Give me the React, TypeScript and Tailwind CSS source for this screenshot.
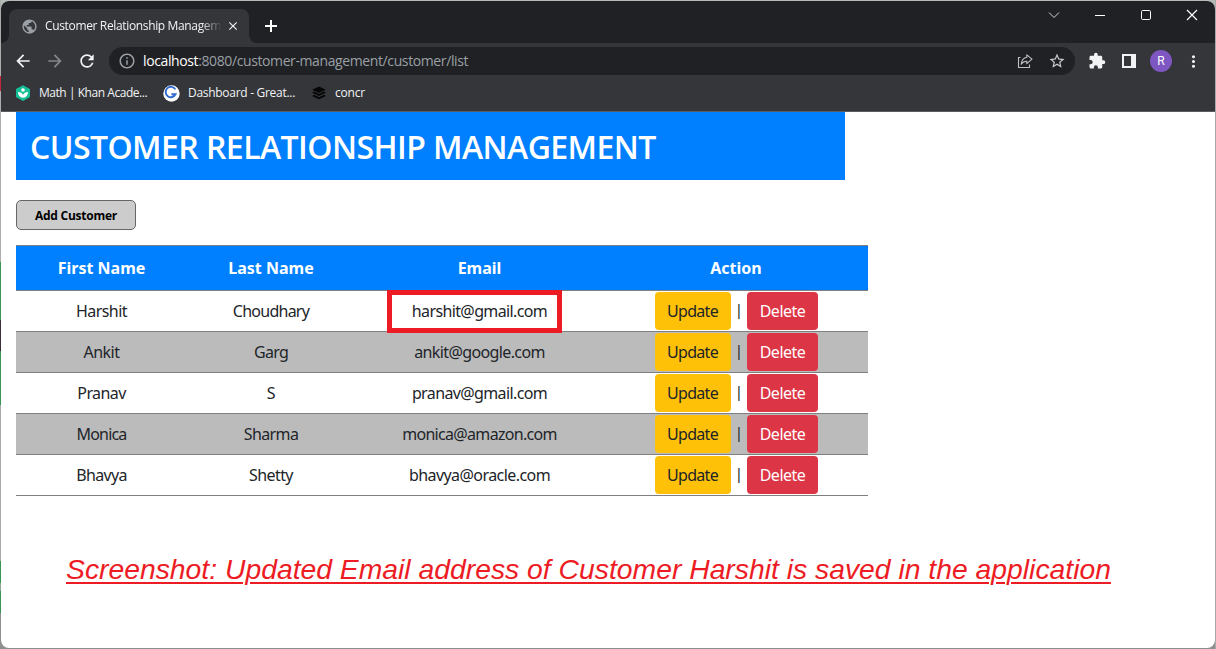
import type { ReactNode } from "react";
import {
  MdArrowBack,
  MdArrowForward,
  MdClose,
  MdExtension,
  MdInfoOutline,
  MdMoreVert,
  MdPublic,
  MdRefresh,
  MdStarBorder,
} from "react-icons/md";

type Customer = { first: string; last: string; email: string; firstTrack: string; lastTrack: string; emailTrack: string };

const customers: Customer[] = [
  { first: "Harshit", last: "Choudhary", email: "harshit@gmail.com", firstTrack: "tracking-[-0.55px]", lastTrack: "tracking-[-0.75px]", emailTrack: "tracking-[-0.62px]" },
  { first: "Ankit", last: "Garg", email: "ankit@google.com", firstTrack: "tracking-[-0.5px]", lastTrack: "tracking-[-0.7px]", emailTrack: "tracking-[-0.62px]" },
  { first: "Pranav", last: "S", email: "pranav@gmail.com", firstTrack: "tracking-[-0.6px]", lastTrack: "tracking-[-0.3px]", emailTrack: "tracking-[-0.62px]" },
  { first: "Monica", last: "Sharma", email: "monica@amazon.com", firstTrack: "tracking-[-0.85px]", lastTrack: "tracking-[-0.6px]", emailTrack: "tracking-[-0.68px]" },
  { first: "Bhavya", last: "Shetty", email: "bhavya@oracle.com", firstTrack: "tracking-[-0.7px]", lastTrack: "tracking-[-0.6px]", emailTrack: "tracking-[-0.57px]" },
];

const uiFont = "font-['Open_Sans','Noto_Sans',sans-serif]";
const pageFont = "font-['Noto_Sans','Open_Sans',sans-serif]";

function ShareIcon() {
  return (
    <svg width="16" height="16" viewBox="0 0 16 16" fill="none" stroke="#bdc1c6" strokeWidth="1.1">
      <path d="M3.5 4.5H1.5V14.5H12.5V11.5" />
      <path d="M9.8 1.8 15 6.2 9.8 10.6V8.2C7.2 8.2 5.4 9.2 4.2 11.2 4.6 7.6 6.6 4.8 9.8 4.3Z" strokeLinejoin="round" />
    </svg>
  );
}

function KhanIcon() {
  return (
    <svg width="16" height="16" viewBox="0 0 16 16">
      <path d="M8 0.2 14.2 3.4Q15 3.8 15 4.6V11.4Q15 12.2 14.2 12.6L8 15.9 1.8 12.6Q1 12.2 1 11.4V4.6Q1 3.8 1.8 3.4Z" fill="#14bf96" />
      <circle cx="8" cy="5" r="1.8" fill="#fff" />
      <path d="M3 7Q6.8 7.2 8 10 9.2 7.2 13 7 13 12.4 8 12.7 3 12.4 3 7Z" fill="#fff" />
    </svg>
  );
}

function GreatIcon() {
  return (
    <svg width="17" height="17" viewBox="0 0 17 17">
      <circle cx="8.5" cy="8.5" r="8.2" fill="#fff" />
      <path d="M12.4 4.4A5.2 5.2 0 1 0 12.6 9.2H8.4" fill="none" stroke="#2f6bd0" strokeWidth="1.9" />
    </svg>
  );
}

function StackIcon() {
  return (
    <svg width="14" height="14" viewBox="0 0 14 14" fill="#060606">
      <path d="M7 0.5 13.8 3.7 7 6.9 0.2 3.7Z" />
      <path d="M2 5.6 0.2 6.8 7 10 13.8 6.8 12 5.6 7 8Z" />
      <path d="M2 8.8 0.2 10 7 13.3 13.8 10 12 8.8 7 11.2Z" />
    </svg>
  );
}

function TabStrip() {
  return (
    <div className="flex h-[42px] items-start bg-[#202124]">
      <div className="relative ml-2 mt-2 flex h-[34px] w-60 items-center rounded-t-lg bg-[#35363a] pl-3">
        <svg className="absolute bottom-0 -left-2" width="8" height="8">
          <path d="M8 0V8H0A8 8 0 0 0 8 0Z" fill="#35363a" />
        </svg>
        <svg className="absolute bottom-0 -right-2" width="8" height="8">
          <path d="M0 0V8H8A8 8 0 0 1 0 0Z" fill="#35363a" />
        </svg>
        <MdPublic size={17} color="#9aa0a6" />
        <div className="ml-[7px] w-[177px] overflow-hidden whitespace-nowrap text-[12px] leading-4 tracking-[-0.35px] text-[#f1f3f4] [mask-image:linear-gradient(to_right,black_88%,transparent)]">
          Customer Relationship Managem
        </div>
        <MdClose className="ml-[4px]" size={14} color="#f1f3f4" />
      </div>
      <svg className="ml-4 mt-[19px]" width="12" height="12" viewBox="0 0 12 12" stroke="#fff" strokeWidth="2">
        <path d="M6 0V12M0 6H12" />
      </svg>
      <div className="ml-auto mr-[17px] mt-[7px] flex items-center gap-[34px]">
        <svg width="12" height="14" viewBox="0 0 12 14" fill="none" stroke="#d5d6d8">
          <path d="M1 4.5 6 9.5 11 4.5" />
        </svg>
        <svg width="12" height="14" viewBox="0 0 12 14" stroke="#fff">
          <path d="M1 7.5H11" />
        </svg>
        <svg width="12" height="14" viewBox="0 0 12 14" fill="none" stroke="#fff">
          <rect x="1.5" y="2.5" width="9" height="9" rx="1.2" />
        </svg>
        <svg width="12" height="14" viewBox="0 0 12 14" stroke="#fff" strokeWidth="1.2">
          <path d="M1 2 11 12M11 2 1 12" />
        </svg>
      </div>
    </div>
  );
}

function Toolbar() {
  return (
    <div className="flex h-9 items-center bg-[#35363a] pl-3">
      <MdArrowBack size={20} color="#f1f3f4" />
      <MdArrowForward className="ml-3" size={20} color="#85878b" />
      <MdRefresh className="ml-3" size={20} color="#f1f3f4" />
      <div className="ml-3 flex h-7 w-[966px] items-center rounded-full bg-[#202124] pl-[9px] pr-[9px]">
        <MdInfoOutline size={18} color="#9aa0a6" />
        <div className="ml-[7px] whitespace-nowrap text-[14px] leading-5 tracking-[-0.39px] text-[#9aa0a6]">
          <span className="text-white">localhost</span>:8080/customer-management/customer/list
        </div>
        <div className="ml-auto flex items-center gap-[15px]">
          <ShareIcon />
          <MdStarBorder size={18} color="#c8cbcf" />
        </div>
      </div>
      <MdExtension className="ml-[13px]" size={18} color="#f1f3f4" />
      <svg className="ml-4" width="14" height="14" viewBox="0 0 14 14">
        <path d="M0 0H14V14H0ZM2 2V12H9V2Z" fill="#f1f3f4" fillRule="evenodd" />
      </svg>
      <div className="ml-[14px] flex size-[22px] items-center justify-center rounded-full bg-[#7e57c2] text-[12px] leading-none text-white font-[Roboto,sans-serif]">
        R
      </div>
      <MdMoreVert className="ml-3" size={19} color="#f1f3f4" />
    </div>
  );
}

function Bookmark({ icon, gap, children }: { icon: ReactNode; gap: string; children: ReactNode }) {
  return (
    <div className={`flex items-center whitespace-nowrap text-[12px] leading-4 text-[#f1f3f4] ${gap}`}>
      {icon}
      {children}
    </div>
  );
}

function BookmarksBar() {
  return (
    <div className="flex h-[33px] items-center border-b border-[#5b5c60] bg-[#35363a] pb-[4px] pl-[14px]">
      <Bookmark icon={<KhanIcon />} gap="gap-2">
        <span className="w-[109px] tracking-[-0.46px]">Math | Khan Acade...</span>
      </Bookmark>
      <div className="ml-[15px]">
        <Bookmark icon={<GreatIcon />} gap="gap-2">
          <span className="w-[108px] tracking-[-0.29px]">Dashboard - Great...</span>
        </Bookmark>
      </div>
      <div className="ml-4">
        <Bookmark icon={<StackIcon />} gap="gap-[9px]">
          <span className="tracking-[-0.2px]">concr</span>
        </Bookmark>
      </div>
    </div>
  );
}

function CustomerTable() {
  return (
    <table className={`mt-[15px] w-[852px] table-fixed border-collapse text-center text-[16px] leading-6 text-[#212529] ${pageFont}`}>
      <colgroup>
        <col className="w-[171px]" />
        <col className="w-[168px]" />
        <col className="w-[249px]" />
        <col className="w-[264px]" />
      </colgroup>
      <thead>
        <tr className="h-[45px] border-y border-[#808080] bg-[#0080ff] text-white">
          <th className="p-0 font-bold">First Name</th>
          <th className="p-0 font-bold">Last Name</th>
          <th className="p-0 font-bold">Email</th>
          <th className="p-0 font-bold">Action</th>
        </tr>
      </thead>
      <tbody>
        {customers.map((c, i) => (
          <tr key={c.first} className="h-[41px] border-b border-[#808080] even:bg-[#bbbbbb]">
            <td className={`p-0 ${c.firstTrack}`}>{c.first}</td>
            <td className={`p-0 ${c.lastTrack}`}>{c.last}</td>
            <td className={`relative p-0 ${c.emailTrack}`}>
              {c.email}
              {i === 0 && <div className="absolute -top-px left-8 h-[43px] w-[175px] border-[5px] border-[#ed1c24]" />}
            </td>
            <td className="p-0">
              <div className="flex items-center pl-[51px]">
                <button className="h-[38px] w-[76px] rounded bg-[#ffc107] pr-px tracking-[-0.7px]">Update</button>
                <span className="w-4 pb-1 text-center text-[15px]">|</span>
                <button className="h-[38px] w-[71px] rounded bg-[#dc3545] tracking-[-0.5px] text-white">Delete</button>
              </div>
            </td>
          </tr>
        ))}
      </tbody>
    </table>
  );
}

function LeftEdge() {
  return (
    <div className="flex flex-col">
      <div className="h-[76px] bg-[#a9aeab]" />
      <div className="h-[15px] bg-[#c0273f]" />
      <div className="h-[171px] bg-[#adadad]" />
      <div className="h-[58px] bg-[#369551]" />
      <div className="h-[31px] bg-[#3b2f3b]" />
      <div className="h-[54px] bg-[#369551]" />
      <div className="h-[156px] bg-[#a9a9a9]" />
      <div className="h-[22px] bg-[#369551]" />
      <div className="h-[8px] bg-[#8fa696]" />
      <div className="h-[22px] bg-[#369551]" />
      <div className="grow bg-[#8f8f8f]" />
    </div>
  );
}

export default function App() {
  return (
    <div className={`grid h-[649px] w-[1216px] grid-cols-[1px_1214px_1px] overflow-hidden bg-[#a9aeab] ${uiFont}`}>
      <LeftEdge />
      <div className="flex flex-col bg-linear-to-b from-[#b4bab6] from-50% to-[#8f8f8f] to-50% py-px">
        <div className="flex grow flex-col overflow-hidden rounded-lg bg-white">
          <TabStrip />
          <Toolbar />
          <BookmarksBar />
          <main className="flex grow flex-col items-start pl-[15px]">
            <h1 className="flex h-[68px] w-[829px] items-center whitespace-nowrap bg-[#0080ff] pl-[14px] pt-px text-[32px] font-semibold leading-10 tracking-[-0.56px] text-white">
              CUSTOMER RELATIONSHIP MANAGEMENT
            </h1>
            <button className="mt-5 h-[30px] w-[120px] rounded-[5px] border border-[#666666] bg-[#cccccc] pt-px text-[12px] font-bold leading-4 tracking-[-0.25px] text-black">
              Add Customer
            </button>
            <CustomerTable />
            <p className="ml-[50px] mt-[57px] whitespace-nowrap font-['Liberation_Sans',Arial,sans-serif] text-[28.32px] italic leading-8 text-[#ed1c24] underline decoration-2 underline-offset-[3px]">
              Screenshot: Updated Email address of Customer Harshit is saved in the application
            </p>
          </main>
        </div>
      </div>
      <div className="bg-[#a8a8a8]" />
    </div>
  );
}
